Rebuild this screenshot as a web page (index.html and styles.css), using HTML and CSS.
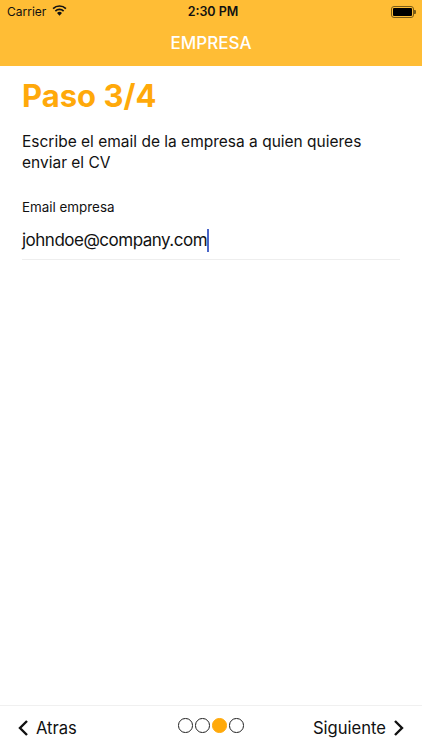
FILE: index.html
```html
<!DOCTYPE html>
<html lang="es">
<head>
<meta charset="utf-8">
<title>Empresa</title>
<link rel="stylesheet" href="styles.css">
</head>
<body>
<div class="screen">
  <header class="header">
    <div class="status">
      <div class="status-left">
        <span>Carrier</span>
        <svg class="wifi" viewBox="0 0 16 12" width="15" height="11"><path d="M8 11.6 5.3 8.7a3.8 3.8 0 0 1 5.4 0Z" fill="#111"/><path d="M3.5 6.6a6.4 6.4 0 0 1 9 0" fill="none" stroke="#111" stroke-width="1.8"/><path d="M1 4a9.9 9.9 0 0 1 14 0" fill="none" stroke="#111" stroke-width="1.8"/></svg>
      </div>
      <span class="time">2:30 PM</span>
      <div class="battery-wrap">
        <div class="battery"><span class="battery-fill"></span></div>
        <span class="battery-nub"></span>
      </div>
    </div>
    <div class="nav-title">EMPRESA</div>
  </header>
  <main class="content">
    <h1 class="step">Paso 3/4</h1>
    <p class="desc">Escribe el email de la empresa a quien quieres enviar el CV</p>
    <div class="field-label">Email empresa</div>
    <div class="field"><span>johndoe@company.com</span><span class="caret"></span></div>
  </main>
  <footer class="footer">
    <div class="nav-btn">
      <svg class="chev" viewBox="0 0 12 18" width="12" height="18"><path d="M10 2 3 9l7 7" fill="none" stroke="#111" stroke-width="2.4"/></svg>
      <span>Atras</span>
    </div>
    <div class="dots">
      <span class="dot"></span><span class="dot"></span><span class="dot on"></span><span class="dot"></span>
    </div>
    <div class="nav-btn end">
      <span>Siguiente</span>
      <svg class="chev" viewBox="0 0 12 18" width="12" height="18"><path d="M2 2l7 7-7 7" fill="none" stroke="#111" stroke-width="2.4"/></svg>
    </div>
  </footer>
</div>
</body>
</html>
```
FILE: styles.css
```css
* { box-sizing: border-box; }
html, body { margin: 0; padding: 0; }
body { font-family: Inter, "Liberation Sans", sans-serif; background: #fff; color: #111; }
.screen { width: 422px; height: 750px; display: flex; flex-direction: column; overflow: hidden; }
.header { height: 66px; background: #ffbd35; flex: none; }
.status { height: 22px; padding: 1px 6px 0 7px; display: grid; grid-template-columns: 1fr auto 1fr; align-items: center; font-size: 12px; color: #111; }
.status-left { display: flex; align-items: center; gap: 6px; }
.wifi { display: block; margin-top: -2px; }
.time { font-weight: 600; font-size: 12.5px; padding-left: 3px; }
.battery-wrap { justify-self: end; display: flex; align-items: center; }
.battery { width: 23px; height: 12px; border: 1px solid #7a5c17; border-radius: 3px; padding: 1px; }
.battery-fill { display: block; height: 100%; background: #000; border-radius: 1px; }
.battery-nub { width: 2px; height: 4px; background: #7a5c17; border-radius: 0 1px 1px 0; }
.nav-title { text-align: center; color: #fff; font-size: 17px; font-weight: 500; line-height: 20px; margin-top: 11px; }
.content { flex: 1; padding: 0 22px; }
.step { margin: 10px 0 0; color: #ffa90a; font-size: 31px; line-height: 40px; font-weight: 700; }
.desc { margin: 15px 0 0; font-size: 15.5px; line-height: 21px; width: 370px; }
.field-label { margin-top: 25px; font-size: 13.4px; line-height: 18px; }
.field { margin-top: 11px; height: 33px; border-bottom: 1px solid #eeeeee; font-size: 17px; letter-spacing: -0.5px; line-height: 26px; display: flex; align-items: flex-start; }
.caret { width: 2px; height: 23px; margin-top: 2px; background: #4a66c8; }
.footer { height: 45px; flex: none; border-top: 1px solid #f0f0f0; padding: 0 17px; display: grid; grid-template-columns: 1fr auto 1fr; align-items: center; }
.nav-btn { display: flex; align-items: center; gap: 7px; font-size: 16.6px; }
.nav-btn.end { justify-content: flex-end; }
.chev { display: block; }
.dots { display: flex; gap: 2.5px; margin-top: -5px; }
.dot { width: 14.6px; height: 14.6px; border: 1px solid #222; border-radius: 50%; }
.dot.on { background: #ffa90a; border-color: #ffa90a; }
```
